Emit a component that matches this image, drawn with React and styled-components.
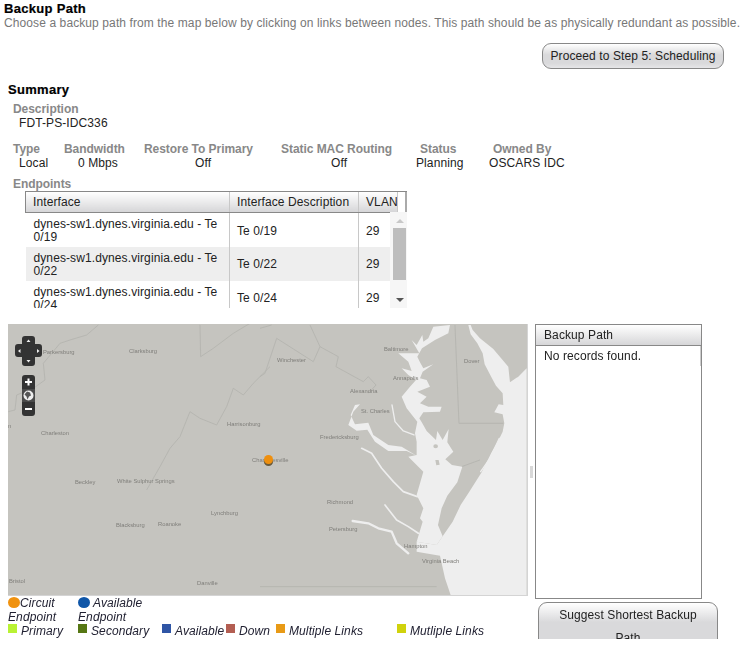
import React from "react"
import styled, { createGlobalStyle } from "styled-components"

const GlobalStyle = createGlobalStyle`
  html, body {
    margin: 0;
    padding: 0;
    background: #fff;
    font-family: "Liberation Sans", Arial, sans-serif;
    font-size: 12px;
    letter-spacing: 0.1px;
    color: #222;
  }
`

const Page = styled.div`
  width: 749px;
  height: 651px;
  overflow: hidden;
`
const Header = styled.header`
  padding: 2px 0 0 4px;
`
const Title = styled.h1`
  margin: 0;
  font-size: 13px;
  line-height: 14px;
  font-weight: bold;
  color: #000;
  letter-spacing: 0.3px;
  -webkit-text-stroke: 0.2px #000;
`
const Intro = styled.p`
  margin: 0;
  font-size: 12px;
  line-height: 14px;
  color: #777;
  white-space: nowrap;
`
const Toolbar = styled.div`
  display: flex;
  justify-content: flex-end;
  padding: 13px 25px 0 0;
`
const Button = styled.button`
  font-family: inherit;
  font-size: 12px;
  letter-spacing: inherit;
  color: #222;
  border: 1px solid #888;
  background: linear-gradient(#fff, #d9d9db 45%, #d9d9db 80%, #e6e6e8);
  border-radius: 9px;
  height: 26px;
  width: 182px;
  padding: 0;
`
const Summary = styled.section`
  padding: 14px 0 0 8px;
`
const SummaryTitle = styled.h2`
  margin: 0;
  font-size: 13px;
  line-height: 14px;
  font-weight: bold;
  color: #000;
  letter-spacing: 0.3px;
  -webkit-text-stroke: 0.2px #000;
`
const Label = styled.div`
  font-weight: bold;
  color: #888;
  line-height: 14px;
  letter-spacing: -0.05px;
  padding-left: ${p => p.$pad || 0}px;
  white-space: nowrap;
`
const Value = styled.div`
  line-height: 14px;
  padding-left: ${p => p.$pad || 0}px;
  white-space: nowrap;
`
const Description = styled.div`
  padding: 5px 0 0 5px;
`
const Fields = styled.div`
  display: flex;
  padding: 12px 0 0 5px;
`
const Field = styled.div`
  width: ${p => p.$w}px;
`
const EndpointsLabel = styled.div`
  padding: 7px 0 0 5px;
`
const TableWrap = styled.div`
  position: relative;
  margin-left: 17px;
  width: 382px;
  height: 117px;
  overflow: hidden;
  box-sizing: border-box;
  border-top: 1px solid #888;
`
const Grid = styled.table`
  border-collapse: collapse;
  table-layout: fixed;
  width: 372px;
`
const Th = styled.th`
  height: 20px;
  padding: 0 0 0 7px;
  text-align: left;
  font-weight: normal;
  color: #222;
  overflow: hidden;
  white-space: nowrap;
  background: linear-gradient(#fff, #d6d6d8);
  border-bottom: 1px solid #888;
  border-right: 1px solid #c8c8c8;
  &:first-child {
    border-left: 1px solid #888;
  }
`
const Td = styled.td`
  height: 34px;
  padding: 3px 0 0 7px;
  box-sizing: border-box;
  line-height: 13.5px;
  background: ${p => (p.$odd ? "#eee" : "#fff")};
  border-right: 1px solid #c8c8c8;
  &:first-child {
    padding-left: 8px;
  }
  &:last-child {
    border-right: 0;
  }
`
const HeaderEdge = styled.div`
  position: absolute;
  top: 0;
  right: 0;
  width: 2px;
  height: 20px;
  background: #aaa;
`
const ScrollBar = styled.div`
  position: absolute;
  top: 20px;
  right: 0;
  bottom: 0;
  width: 17px;
  background: #f6f6f6;
`
const Thumb = styled.div`
  position: absolute;
  top: 16px;
  left: 3px;
  height: 52px;
  width: 13px;
  background: #bdbdbd;
`
const Arrow = styled.div`
  position: absolute;
  left: 6px;
  width: 0;
  height: 0;
  border-left: 4px solid transparent;
  border-right: 4px solid transparent;
  ${p =>
    p.$up
      ? "top: 7px; border-bottom: 4px solid #c8c8c8;"
      : "bottom: 6px; border-top: 4px solid #555;"}
`
const Workspace = styled.div`
  display: flex;
  padding: 16px 0 0 8px;
`
const LeftColumn = styled.div`
  width: 520px;
`
const MapFrame = styled.div`
  width: 520px;
  height: 272px;
  svg {
    display: block;
  }
`
const Splitter = styled.div`
  width: 7px;
  height: 272px;
  display: flex;
  align-items: center;
  justify-content: center;
  &::after {
    content: "";
    width: 3px;
    height: 12px;
    margin-top: 23px;
    margin-right: 1px;
    background: #d8d8d8;
  }
`
const RightColumn = styled.div`
  width: 183px;
`
const Panel = styled.div`
  width: 167px;
  height: 275px;
  box-sizing: border-box;
  border: 1px solid #888;
  position: relative;
`
const PanelTitle = styled.div`
  height: 20px;
  line-height: 21px;
  padding-left: 8px;
  background: linear-gradient(#fff, #d6d6d8);
  border-bottom: 1px solid #888;
`
const PanelBody = styled.div`
  padding: 3px 8px;
  line-height: 14px;
`
const PanelEdge = styled.div`
  position: absolute;
  top: 21px;
  right: 0;
  width: 1px;
  height: 20px;
  background: #ccc;
`
const SuggestClip = styled.div`
  height: 37px;
  margin: 3px 0 0 3px;
  overflow: hidden;
`
const SuggestButton = styled(Button)`
  width: 180px;
  height: 50px;
  display: block;
  line-height: 23px;
  padding: 0 20px;
  background: linear-gradient(#fff, #d9d9db 40%);
`
const Legend = styled.div`
  font-style: italic;
  color: #223;
  line-height: 14px;
`
const LegendTop = styled.div`
  display: flex;
  height: 28px;
`
const LegendEndpoint = styled.div`
  width: 70px;
`
const Dot = styled.span`
  display: inline-block;
  width: 12px;
  height: 11px;
  border-radius: 50%;
  background: ${p => p.$color};
  vertical-align: -1px;
`
const LegendLinks = styled.div`
  display: flex;
`
const LegendLink = styled.div`
  width: ${p => p.$w}px;
  display: flex;
  white-space: nowrap;
`
const Swatch = styled.span`
  width: 9px;
  height: 9px;
  margin: 0 4px 0 0;
  flex: none;
  background: ${p => p.$color};
`

const rows = [
  ["0/19", "Te 0/19"],
  ["0/22", "Te 0/22"],
  ["0/24", "Te 0/24"],
]

const links = [
  { name: "Primary", color: "#b9f234", w: 70 },
  { name: "Secondary", color: "#567714", w: 84 },
  { name: "Available", color: "#2f55a5", w: 64 },
  { name: "Down", color: "#b35e52", w: 50 },
  { name: "Multiple Links", color: "#e89a16", w: 121 },
  { name: "Mutliple Links", color: "#d0d20c", w: 100 },
]

const labels = [
  ["Parkersburg", 43, 354],
  ["Clarksburg", 129, 353],
  ["Winchester", 277, 362],
  ["Baltimore", 384, 351],
  ["Dover", 464, 363],
  ["Annapolis", 393, 380],
  ["Alexandria", 350, 393],
  ["St. Charles", 361, 413],
  ["Fredericksburg", 320, 439],
  ["Harrisonburg", 227, 426],
  ["Charleston", 41, 435],
  ["Charlottesville", 252, 462],
  ["Richmond", 327, 504],
  ["Petersburg", 329, 531],
  ["Hampton", 404, 548],
  ["Virginia Beach", 422, 563],
  ["Lynchburg", 211, 515],
  ["Roanoke", 158, 526],
  ["Blacksburg", 116, 527],
  ["Beckley", 75, 484],
  ["White Sulphur Springs", 117, 483],
  ["Bristol", 9, 583],
  ["Danville", 197, 585],
]

const LAND = "#c5c4bf"
const SEA = "#eeeeee"
const LINE = "#b3b2ad"

// coast and bay traced from the picture, 3x coords starting at (260,325)
const OCEAN =
  "M625 0L632 28L652 55L668 85L674 118L692 152L708 182L728 205L730 240L716 238L703 262L728 268L733 295L728 320L716 345L695 382L665 442L628 500L602 540L578 590L548 634L530 660L470 650L470 680L540 692L555 760L572 810L800 810L800 130L775 155L750 172L745 125L700 72L660 40L638 15L632 0Z"
const BAY =
  "M548 634L534 600L545 550L562 512L592 472L607 425L576 420L556 403L580 380L562 352L566 312L548 345L532 318L528 345L500 318L487 295L478 280L490 262L540 260L545 245L505 245L480 235L500 215L472 200L510 185L500 165L480 160L488 140L520 118L490 130L480 112L472 95L486 70L525 45L565 25L570 0L520 5L505 40L490 50L487 30L470 60L455 45L478 85L450 85L415 85L445 110L455 138L425 130L445 150L468 165L450 185L425 215L440 250L472 290L465 325L470 350L470 390L445 395L490 440L470 510L490 550L480 580L488 590L470 650L530 660Z"
const POTOMAC =
  "M470 392L440 378L385 378L345 350L322 314L290 317L265 300L280 260L300 238L285 240L272 270L285 298L325 293L340 330L385 360L425 365Z"

const MapDrawing = () => (
  <svg width="520" height="272" viewBox="8 324 520 272">
    <defs>
      <filter id="soft" x="-10%" y="-10%" width="120%" height="120%">
        <feGaussianBlur stdDeviation="0.3" />
      </filter>
    </defs>
    <rect x="8" y="324" width="520" height="272" fill={LAND} />
    <g filter="url(#soft)">
      <g transform="translate(0 320) scale(0.3333)" fill="none" stroke={LINE} strokeWidth="2.4">
        <path d="M295 15L260 45L210 60L180 70L130 130L135 180L100 205L50 225L45 270L25 275" />
        <path d="M600 15L602 110L640 85L700 40L750 10" />
        <path d="M810 140L760 190L730 225L700 205L680 260L650 315L600 295L570 275L540 350L510 385L480 440L440 510" />
      </g>
      <g transform="translate(260 325) scale(0.3333)">
        <g fill="none" stroke={LINE} strokeWidth="2.4">
          <path d="M0 155L15 145L50 40L160 110L180 65L235 95L228 125L310 170L325 155L348 180L325 205" />
          <path d="M150 0L180 65" />
          <path d="M0 10L35 0" />
          <path d="M585 0L597 295L730 295" />
          <path d="M0 785L530 785" />
          <path d="M605 425L660 405" />
        </g>
        <path fill={SEA} d={OCEAN} />
        <path fill={SEA} d={BAY} />
        <path fill={SEA} d={POTOMAC} />
        <g fill="none" stroke={SEA} strokeLinejoin="round" strokeLinecap="round">
          <path strokeWidth="5" d="M305 370L335 385L365 430L400 470L430 500L472 515" />
          <path strokeWidth="5" d="M375 540L410 585L445 605L475 625" />
          <path strokeWidth="7" d="M278 588L325 595L355 610L395 620L410 655L445 685" />
          <path strokeWidth="4" d="M396 240L405 290L430 318L462 330" />
          <path strokeWidth="4" d="M662 440L690 400L718 340" />
          <path strokeWidth="4" d="M570 610L580 595M595 570L603 555" />
        </g>
        <path fill={LAND} d="M520 364a7 6 0 1 0 14 0a7 6 0 1 0 -14 0M526 405l10 0l3 14l-10 2z" />
      </g>
      <g fontFamily="'Liberation Sans', Arial, sans-serif" fontSize="5.8" letterSpacing="0" fill="#7f7e7a">
        {labels.map(([name, x, y]) => (
          <text key={name} x={x} y={y}>
            {name}
          </text>
        ))}
        <text x="8" y="428">n</text>
      </g>
    </g>
    <rect x="527" y="324" width="1" height="272" fill="#d4d4d4" />
    <rect x="8" y="595" width="520" height="1" fill="#d4d4d4" />
    <ellipse cx="268.500" cy="462" rx="4.500" ry="4" fill="#6b5a3a" />
    <circle cx="268.500" cy="459.500" r="4.500" fill="#ee8f0e" />
    {/* pan control */}
    <path
      fill="#333"
      d="M25 336h7a3 3 0 0 1 3 3v5h4a3 3 0 0 1 3 3v7a3 3 0 0 1 -3 3h-4v6a3 3 0 0 1 -3 3h-7a3 3 0 0 1 -3 -3v-6h-4a3 3 0 0 1 -3 -3v-7a3 3 0 0 1 3 -3h4v-5a3 3 0 0 1 3 -3z"
    />
    <path fill="#eee" d="M26.500 342l2 -2.500l2 2.500zM26.500 360h4l-2 2.500zM20.500 349v4l-2.500 -2zM37 349l2.500 2l-2.500 2z" />
    {/* zoom control */}
    <rect x="22" y="375" width="13" height="41" rx="3" fill="#333" />
    <rect x="22" y="389" width="13" height="13" fill="#4a4a4a" />
    <path stroke="#fff" strokeWidth="2" d="M25 382h7M28.500 378.500v7M25 409h7" />
    <circle cx="28.500" cy="395.500" r="5" fill="#eee" />
    <path fill="#555" d="M27 391.500l3 1l1 3l-2 1l-1.500 3l-1 -3l-2 -2z" />
  </svg>
)

const App = () => (
  <Page>
    <GlobalStyle />
    <Header>
      <Title>Backup Path</Title>
      <Intro>
        Choose a backup path from the map below by clicking on links between nodes. This path should be as physically redundant as possible.
      </Intro>
    </Header>
    <Toolbar>
      <Button>Proceed to Step 5: Scheduling</Button>
    </Toolbar>
    <Summary>
      <SummaryTitle>Summary</SummaryTitle>
      <Description>
        <Label>Description</Label>
        <Value $pad={6}>FDT-PS-IDC336</Value>
      </Description>
      <Fields>
        <Field $w={51}>
          <Label>Type</Label>
          <Value $pad={6}>Local</Value>
        </Field>
        <Field $w={80}>
          <Label>Bandwidth</Label>
          <Value $pad={14}>0 Mbps</Value>
        </Field>
        <Field $w={137}>
          <Label>Restore To Primary</Label>
          <Value $pad={51}>Off</Value>
        </Field>
        <Field $w={135}>
          <Label>Static MAC Routing</Label>
          <Value $pad={50}>Off</Value>
        </Field>
        <Field $w={73}>
          <Label $pad={4}>Status</Label>
          <Value>Planning</Value>
        </Field>
        <Field $w={80}>
          <Label $pad={4}>Owned By</Label>
          <Value>OSCARS IDC</Value>
        </Field>
      </Fields>
      <EndpointsLabel>
        <Label>Endpoints</Label>
      </EndpointsLabel>
      <TableWrap>
        <Grid>
          <colgroup>
            <col style={{ width: 204 }} />
            <col style={{ width: 129 }} />
            <col style={{ width: 39 }} />
          </colgroup>
          <thead>
            <tr>
              <Th>Interface</Th>
              <Th>Interface Description</Th>
              <Th>VLAN</Th>
            </tr>
          </thead>
          <tbody>
            {rows.map(([port, desc], i) => (
              <tr key={port}>
                <Td $odd={i === 1}>dynes-sw1.dynes.virginia.edu - Te {port}</Td>
                <Td $odd={i === 1}>{desc}</Td>
                <Td $odd={i === 1}>29</Td>
              </tr>
            ))}
          </tbody>
        </Grid>
        <HeaderEdge />
        <ScrollBar>
          <Arrow $up />
          <Thumb />
          <Arrow />
        </ScrollBar>
      </TableWrap>
    </Summary>
    <Workspace>
      <LeftColumn>
        <MapFrame>
          <MapDrawing />
        </MapFrame>
        <Legend>
          <LegendTop>
            <LegendEndpoint>
              <Dot $color="#f0920f" />Circuit Endpoint
            </LegendEndpoint>
            <LegendEndpoint>
              <Dot $color="#0f56a8" /> Available Endpoint
            </LegendEndpoint>
          </LegendTop>
          <LegendLinks>
            {links.map(link => (
              <LegendLink key={link.name} $w={link.w}>
                <Swatch $color={link.color} />
                {link.name}
              </LegendLink>
            ))}
          </LegendLinks>
        </Legend>
      </LeftColumn>
      <Splitter />
      <RightColumn>
        <Panel>
          <PanelTitle>Backup Path</PanelTitle>
          <PanelBody>No records found.</PanelBody>
          <PanelEdge />
        </Panel>
        <SuggestClip>
          <SuggestButton>Suggest Shortest Backup Path</SuggestButton>
        </SuggestClip>
      </RightColumn>
    </Workspace>
  </Page>
)

export default App
